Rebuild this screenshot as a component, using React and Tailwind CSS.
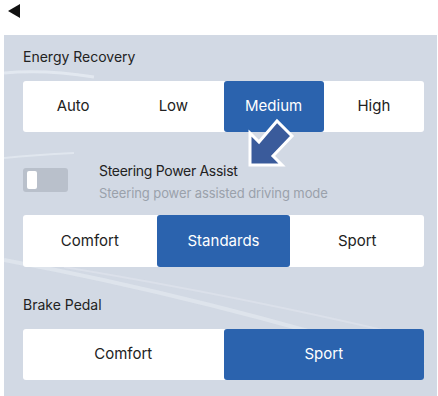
import React from "react";

const font = { fontFamily: "Inter, 'Liberation Sans', sans-serif" };

function Segmented({ items, active, className }) {
  return (
    <div className={"flex bg-white rounded-[3px] " + className}>
      {items.map((item) => (
        <div
          key={item}
          className={
            "flex-1 flex items-center justify-center text-[15px] rounded-[3px] " +
            (item === active ? "bg-[#2b63ae] text-white" : "text-[#222]")
          }
        >
          {item}
        </div>
      ))}
    </div>
  );
}

export default function App() {
  return (
    <div className="w-[438px] h-[396px] bg-white overflow-hidden relative" style={font}>
      <div className="h-[35px] pl-[8px] pt-[4px]">
        <svg width="13" height="14" viewBox="0 0 13 14">
          <polygon points="12,0 12,14 0,7" fill="#111" />
        </svg>
      </div>

      <div className="ml-[4px] w-[433px] h-[361px] bg-[#d2d9e4] relative pl-[19px]">
        {/* streaks in the background */}
        <svg className="absolute inset-0 pointer-events-none" width="433" height="361">
          <path d="M0 38 Q40 34 90 42" stroke="#e6ebf2" strokeWidth="3" fill="none" opacity="0.8" />
          <path d="M0 123 Q30 120 70 118" stroke="#e6ebf2" strokeWidth="2" fill="none" opacity="0.7" />
          <path d="M0 225 Q200 262 420 330" stroke="#e3e8ef" strokeWidth="4" fill="none" opacity="0.7" />
          <path d="M60 232 Q240 262 400 300" stroke="#e3e8ef" strokeWidth="2" fill="none" opacity="0.5" />
        </svg>

        <div className="relative">
          <div className="pt-[12px] h-[46px] text-[14px] leading-[20px] text-[#222]">Energy Recovery</div>
          <Segmented
            items={["Auto", "Low", "Medium", "High"]}
            active="Medium"
            className="w-[401px] h-[51px]"
          />

          <div className="flex mt-[25px] h-[50px]">
            <div className="w-[45px] h-[24px] mt-[11px] bg-[#b9c0cb] rounded-[3px] pl-[4px] pt-[3px]">
              <div className="w-[10px] h-[18px] bg-white rounded-[2px]" />
            </div>
            <div className="ml-[31px]">
              <div className="text-[14px] leading-[20px] tracking-[-0.3px] text-[#222] mt-[4px]">
                Steering Power Assist
              </div>
              <div className="text-[13px] leading-[18px] tracking-[-0.1px] text-[#9aa1ab] mt-[3px]">
                Steering power assisted driving mode
              </div>
            </div>
          </div>

          <Segmented
            items={["Comfort", "Standards", "Sport"]}
            active="Standards"
            className="w-[401px] h-[52px] mt-[8px]"
          />

          <div className="mt-[28px] h-[34px] text-[14px] leading-[20px] text-[#222]">Brake Pedal</div>
          <Segmented
            items={["Comfort", "Sport"]}
            active="Sport"
            className="w-[401px] h-[51px]"
          />
        </div>

        {/* pointer arrow */}
        <svg className="absolute left-[238px] top-[80px]" width="62" height="56" viewBox="0 0 62 56">
          <polygon
            points="8,50 8,18 17,27 35,6 50,21 31,41 40,50"
            fill="#3a5b9b"
            stroke="white"
            strokeWidth="3"
            strokeLinejoin="miter"
          />
        </svg>
      </div>
    </div>
  );
}
